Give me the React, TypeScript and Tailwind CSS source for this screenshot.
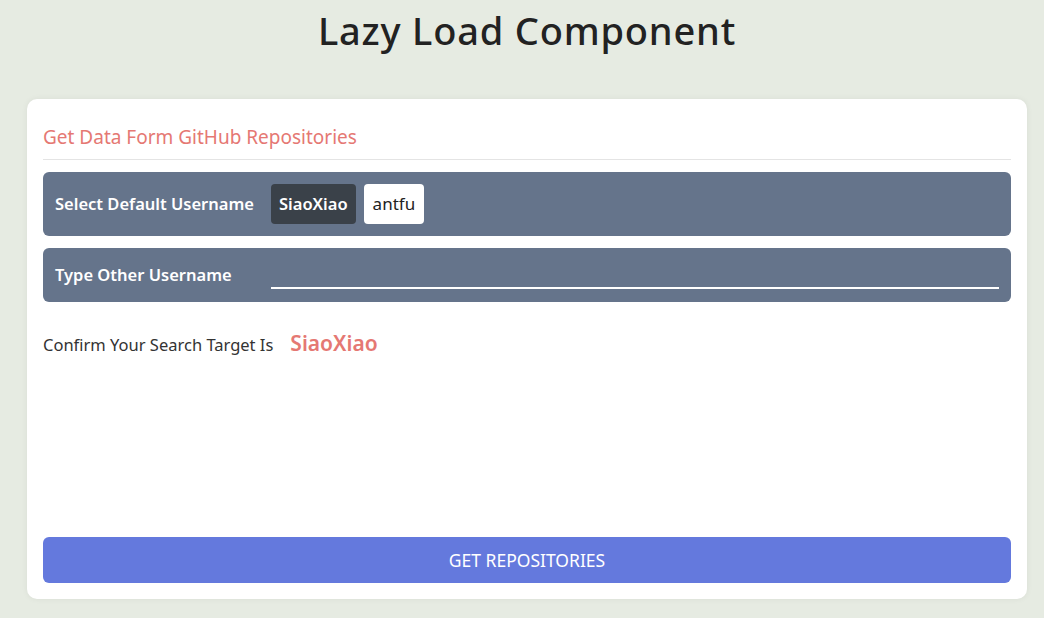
import React from "react";

export default function App() {
  return (
    <div
      className="w-[1044px] h-[618px] bg-[#e6ebe2] overflow-hidden flex flex-col items-start"
      style={{ fontFamily: '"Noto Sans", "Open Sans", sans-serif' }}
    >
      <h1 className="self-center ml-[10px] mt-[3px] h-[54px] text-[38px] leading-[54px] font-medium tracking-[0.8px] text-[#222]">
        Lazy Load Component
      </h1>
      <div className="ml-[27px] mt-[42px] w-[1000px] h-[500px] bg-white rounded-[10px] shadow-[0_0_6px_rgba(0,0,0,0.06)] px-4 pt-[24px] pb-4 flex flex-col">
        <div className="text-[19px] leading-[28px] text-[#e57873] pb-[8px] border-b border-[#e4e4e4]">
          Get Data Form GitHub Repositories
        </div>
        <div className="mt-3 h-16 rounded-[6px] bg-[#65748b] flex items-center px-3">
          <span className="w-[216px] text-white font-semibold text-[16.5px]">Select Default Username</span>
          <button className="h-10 px-2 rounded-[4px] bg-[#3a4149] text-white font-semibold text-[16.5px]">SiaoXiao</button>
          <button className="ml-2 h-10 px-[9px] rounded-[4px] bg-white text-[#222] text-[17px]">antfu</button>
        </div>
        <div className="mt-3 h-[54px] rounded-[6px] bg-[#65748b] flex items-center px-3">
          <span className="w-[216px] text-white font-semibold text-[16.5px]">Type Other Username</span>
          <div className="flex-1 h-[28px] border-b-2 border-white" />
        </div>
        <div className="mt-[28px] flex items-center h-[30px]">
          <span className="text-[16.5px] text-[#333]">Confirm Your Search Target Is</span>
          <span className="ml-[17px] mb-[3px] text-[21px] font-semibold text-[#e57873]">SiaoXiao</span>
        </div>
        <div className="flex-1" />
        <button className="h-[46px] w-full rounded-[6px] bg-[#6479dd] text-white text-[17.5px]">
          GET REPOSITORIES
        </button>
      </div>
    </div>
  );
}
